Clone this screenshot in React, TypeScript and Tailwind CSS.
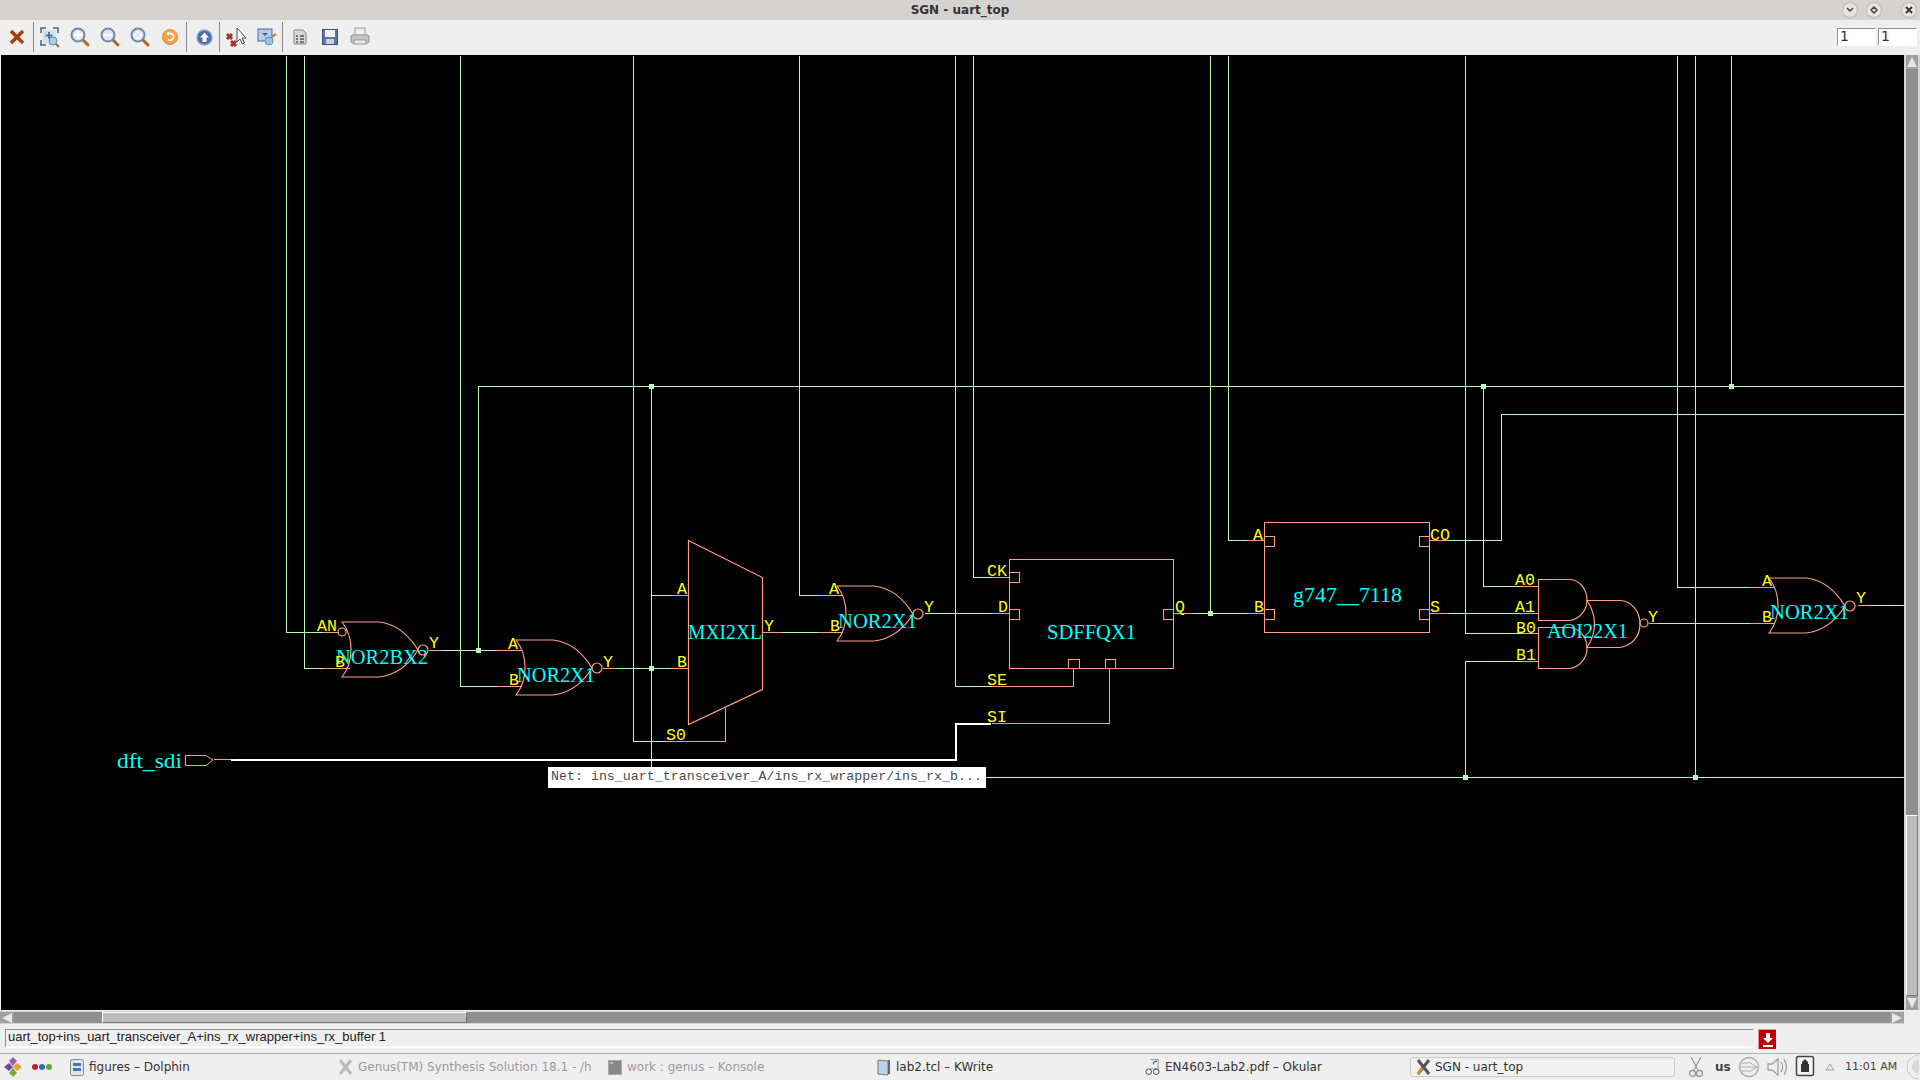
import React from 'react';

const GREEN = '#b9f7b4';
const ORANGE = '#ff9f80';
const SERIF = '"Liberation Serif", serif';
const MONO = '"Liberation Mono", monospace';

// [x1,y1,x2,y2,...] polylines
const greenWires: number[][] = [
  [286, 55, 286, 632, 322, 632],
  [304, 55, 304, 668, 322, 668],
  [460, 55, 460, 686, 496, 686],
  [441, 650, 496, 650],
  [478, 650, 478, 386, 1905, 386],
  [633, 55, 633, 741, 665, 741],
  [651, 386, 651, 777, 1905, 777],
  [651, 595, 670, 595],
  [615, 668, 670, 668],
  [781, 632, 817, 632],
  [799, 55, 799, 595, 817, 595],
  [925, 613, 991, 613],
  [973, 55, 973, 577, 991, 577],
  [955, 55, 955, 686, 991, 686],
  [1210, 55, 1210, 613],
  [1192, 613, 1246, 613],
  [1228, 55, 1228, 540, 1246, 540],
  [1447, 540, 1501, 540, 1501, 414, 1905, 414],
  [1447, 613, 1520, 613],
  [1465, 55, 1465, 633, 1520, 633],
  [1465, 777, 1465, 661, 1520, 661],
  [1483, 386, 1483, 586, 1520, 586],
  [1657, 623, 1749, 623],
  [1677, 55, 1677, 587, 1749, 587],
  [1695, 55, 1695, 777],
  [1731, 55, 1731, 386],
  [1867, 605, 1905, 605],
];

const orangeWires: number[][] = [
  [322, 632, 338, 632],
  [322, 668, 349, 668],
  [428, 650, 441, 650],
  [496, 650, 521, 650],
  [496, 686, 521, 686],
  [602, 668, 615, 668],
  [670, 595, 688, 595],
  [670, 668, 688, 668],
  [665, 741, 725, 741, 725, 707],
  [762, 632, 781, 632],
  [817, 595, 842, 595],
  [817, 632, 842, 632],
  [924, 613, 925, 613],
  [991, 577, 1009, 577],
  [991, 613, 1009, 613],
  [991, 686, 1073, 686, 1073, 668],
  [991, 723, 1109, 723, 1109, 668],
  [1173, 613, 1192, 613],
  [1246, 540, 1264, 540],
  [1246, 613, 1264, 613],
  [1429, 540, 1447, 540],
  [1429, 613, 1447, 613],
  [1520, 586, 1538, 586],
  [1520, 613, 1538, 613],
  [1520, 633, 1538, 633],
  [1520, 661, 1538, 661],
  [1648, 623, 1657, 623],
  [1749, 587, 1774, 587],
  [1749, 623, 1774, 623],
  [1857, 605, 1867, 605],
  [213, 759, 231, 759],
];

const nodes: [number, number][] = [
  [478, 650], [651, 386], [651, 668], [1210, 613], [1483, 386], [1731, 386], [1465, 777], [1695, 777],
];

const pins: [string, number, number][] = [
  ['AN', 317, 631], ['B', 335, 667], ['Y', 429, 648],
  ['A', 508, 649], ['B', 509, 685], ['Y', 603, 667],
  ['A', 677, 594], ['B', 677, 667], ['Y', 764, 631], ['S0', 666, 740],
  ['A', 829, 594], ['B', 830, 631], ['Y', 924, 612],
  ['CK', 987, 576], ['D', 998, 612], ['SE', 987, 685], ['SI', 987, 722], ['Q', 1175, 612],
  ['A', 1253, 540], ['B', 1254, 612], ['CO', 1430, 540], ['S', 1430, 612],
  ['A0', 1515, 585], ['A1', 1515, 612], ['B0', 1516, 633], ['B1', 1516, 660], ['Y', 1648, 622],
  ['A', 1762, 586], ['B', 1762, 622], ['Y', 1856, 603],
];

const labels: [string, number, number, number][] = [
  ['NOR2BX2', 336, 664, 92],
  ['NOR2X1', 517, 682, 78],
  ['MXI2XL', 688, 639, 74],
  ['NOR2X1', 838, 628, 79],
  ['SDFFQX1', 1047, 639, 89],
  ['g747__7118', 1293, 602, 109],
  ['AOI22X1', 1547, 638, 81],
  ['NOR2X1', 1770, 619, 79],
  ['dft_sdi', 117, 768, 65],
];

const Bubble = ({ x, y, r }: { x: number; y: number; r: number }) => (
  <circle cx={x} cy={y} r={r} fill="none" stroke={ORANGE} strokeWidth={1.2} shapeRendering="geometricPrecision" />
);

const NorGate = ({ x, y }: { x: number; y: number }) => (
  <g>
    <path
      fill="none"
      stroke={ORANGE}
      strokeWidth={1.2}
      shapeRendering="geometricPrecision"
      d={`M${x} ${y}H${x + 37}C${x + 55} ${y + 2} ${x + 68} ${y + 15} ${x + 76} ${y + 28}C${x + 68} ${y + 41} ${x + 55} ${y + 53} ${x + 37} ${y + 55}H${x}C${x + 12} ${y + 40} ${x + 12} ${y + 15} ${x} ${y}Z`}
    />
    <Bubble x={x + 81} y={y + 28} r={5} />
  </g>
);

const Port = ({ x, y, w = 10, h = 10 }: { x: number; y: number; w?: number; h?: number }) => (
  <rect x={x + 0.5} y={y + 0.5} width={w} height={h} fill="none" stroke={ORANGE} />
);

const Schematic = () => (
  <svg className="-ml-px block" width={1920} height={955} viewBox="0 55 1920 955" shapeRendering="crispEdges">
    {greenWires.map((w, i) => (
      <polyline key={i} points={w.map((v) => v + 0.5).join(' ')} fill="none" stroke={GREEN} strokeWidth={1} />
    ))}
    {orangeWires.map((w, i) => (
      <polyline key={i} points={w.map((v) => v + 0.5).join(' ')} fill="none" stroke={ORANGE} strokeWidth={1} />
    ))}
    <polyline points="231,759.5 955.5,759.5 955.5,723.5 991,723.5" fill="none" stroke="#fff" strokeWidth={2} />
    {nodes.map(([x, y], i) => (
      <rect key={i} x={x - 2} y={y - 2} width={5} height={5} fill={GREEN} />
    ))}

    <NorGate x={342} y={622} />
    <Bubble x={342} y={632} r={4} />
    <NorGate x={516} y={640} />
    <NorGate x={837} y={586} />
    <NorGate x={1769} y={578} />

    <polygon points="688.5,540.5 762.5,577.5 762.5,689.5 688.5,724.5" fill="none" stroke={ORANGE} shapeRendering="geometricPrecision" strokeWidth={1.2} />

    <rect x={1009.5} y={559.5} width={164} height={109} fill="none" stroke={ORANGE} />
    <Port x={1009} y={572} />
    <Port x={1009} y={609} />
    <Port x={1163} y={609} />
    <Port x={1068} y={659} w={11} h={9} />
    <Port x={1105} y={659} w={10} h={9} />

    <rect x={1264.5} y={522.5} width={165} height={110} fill="none" stroke={ORANGE} />
    <Port x={1264} y={536} />
    <Port x={1264} y={609} />
    <Port x={1419} y={536} />
    <Port x={1419} y={609} />

    <g fill="none" stroke={ORANGE} strokeWidth={1.2} shapeRendering="geometricPrecision">
      <path d="M1538.5 579.5H1570C1580 580 1587 590 1587 600C1587 610 1580 619 1570 620.5H1538.5Z" />
      <path d="M1538.5 627.5H1570C1580 628 1587 638 1587 648C1587 658 1580 667 1570 668.5H1538.5Z" />
      <path d="M1587 600.5H1620C1632 601 1640 612 1640 624C1640 636 1632 646 1620 647.5H1587C1597 633 1597 615 1587 600.5Z" />
      <circle cx={1644} cy={623} r={4} />
    </g>

    <path d="M185.5 755.5H206L213 760L206 765.5H185.5Z" fill="none" stroke={ORANGE} strokeWidth={1} shapeRendering="geometricPrecision" />

    {labels.map(([t, x, y, w]) => (
      <text key={`${t}${x}`} x={x} y={y} fill="#00ffff" fontFamily={SERIF} fontSize={21} textLength={w} lengthAdjust="spacingAndGlyphs">
        {t}
      </text>
    ))}
    {pins.map(([t, x, y]) => (
      <text key={`${t}${x}${y}`} x={x} y={y} fill="#ffff00" fontFamily={MONO} fontSize={16.6}>
        {t}
      </text>
    ))}
  </svg>
);

const ToolSep = () => <div className="h-[30px] w-px bg-[#8a8a8a]" />;

const Tool = ({ w = 30, children }: { w?: number; children: React.ReactNode }) => (
  <div className={`flex justify-center ${w === 31 ? 'w-[31px]' : 'w-[30px]'}`}>{children}</div>
);

const Mag = ({ children }: { children?: React.ReactNode }) => (
  <svg width={22} height={22} viewBox="0 0 22 22">
    <path d="M13 13l6 6" stroke="#b5651d" strokeWidth={3} strokeLinecap="round" />
    <circle cx={9} cy={9} r={6.5} fill="#dfe7f2" stroke="#6f88ad" strokeWidth={2} />
    {children}
  </svg>
);

const Toolbar = () => (
  <div className="flex h-[35px] items-center bg-[#efefef] pb-px">
    <div className="flex w-[33px] justify-center">
      <svg width={16} height={16} viewBox="0 0 16 16">
        <path d="M2 2l12 12M14 2L2 14" stroke="#a83c10" strokeWidth={3.5} />
      </svg>
    </div>
    <ToolSep />
    <div className="flex w-[152px] items-center pl-px">
      <Tool>
        <svg width={22} height={22} viewBox="0 0 22 22" fill="none">
          <path d="M2 7V2h5M14 2h5v5M2 14v5h5" stroke="#3f6a92" strokeWidth={1.5} />
          <rect x="4" y="4" width="13" height="13" fill="#d5e2ee" />
          <path d="M10 6v7M6.5 9.500h7" stroke="#4d7aa5" strokeWidth={2} />
          <circle cx="14" cy="15" r="4" fill="#a9cdea" stroke="#5f8fb8" />
          <path d="M17 18l3 3" stroke="#b5651d" strokeWidth={2} />
        </svg>
      </Tool>
      <Tool>
        <Mag>
          <path d="M9 5v8M5 9h8" stroke="#fff" strokeWidth={2.500} />
        </Mag>
      </Tool>
      <Tool>
        <Mag>
          <path d="M5 9h8" stroke="#fff" strokeWidth={2.500} />
        </Mag>
      </Tool>
      <Tool>
        <Mag>
          <path d="M9 4.500l2 2.500H7zM9 13.500l2-2.500H7zM4.500 9L7 7v4zM13.500 9L11 7v4z" fill="#fff" />
        </Mag>
      </Tool>
      <Tool>
        <svg width={18} height={18} viewBox="0 0 18 18" fill="none">
          <circle cx="9" cy="9" r="7.500" fill="#f2a44c" stroke="#e58a2c" />
          <path d="M6 5.500h4.500a3.500 3.500 0 1 1-3.500 6" stroke="#fff" strokeWidth={1.5} />
          <path d="M8 3.500L5.500 5.500 8 7.500z" fill="#fff" />
        </svg>
      </Tool>
    </div>
    <ToolSep />
    <div className="flex w-[32px] justify-center pl-[3px]">
      <svg width={17} height={17} viewBox="0 0 17 17">
        <circle cx="8.500" cy="8.500" r="7.500" fill="#4a6fa8" stroke="#8ea5c9" strokeWidth={1.500} />
        <path d="M8.500 3.500L13 8.500H10.500V13H6.500V8.500H4z" fill="#fff" />
      </svg>
    </div>
    <ToolSep />
    <div className="flex w-[62px] items-center">
      <Tool w={31}>
        <svg width={22} height={22} viewBox="0 0 22 22">
          <path d="M2 8l5 5M7 8l-5 5M6 15l5 5M11 15l-5 5" stroke="#a83232" strokeWidth={3} />
          <path d="M12 2v14l3-3 2.500 5 2-1-2.500-5h4z" fill="#fff" stroke="#444" />
        </svg>
      </Tool>
      <Tool w={31}>
        <svg width={20} height={20} viewBox="0 0 20 20">
          <rect x="1" y="2" width="14" height="12" fill="#b8cbe6" stroke="#4a6aa0" />
          <path d="M5 6h6l-3 3z" fill="#3f6296" />
          <circle cx="12" cy="14" r="4" fill="#9cc2e0" stroke="#5f8fb8" />
          <path d="M15 10l4-3" stroke="#c87820" strokeWidth={2} />
        </svg>
      </Tool>
    </div>
    <ToolSep />
    <div className="flex items-center pl-[2px]">
      <Tool>
        <svg width={14} height={16} viewBox="0 0 14 16">
          <path d="M1 1h9l3 3v11H1z" fill="#d8d8d8" stroke="#8a8a8a" />
          <path d="M3 7h2M7 7h4M3 10h2M7 10h4M3 13h2M7 13h4" stroke="#555" strokeWidth={1.500} />
        </svg>
      </Tool>
      <Tool>
        <svg width={16} height={16} viewBox="0 0 16 16">
          <rect x="0.500" y="0.500" width="15" height="15" fill="#5c74a8" stroke="#3c5280" />
          <rect x="3" y="1" width="10" height="7" fill="#f2f2f2" />
          <rect x="4" y="10" width="8" height="5" fill="#c8d0de" />
        </svg>
      </Tool>
      <Tool>
        <svg width={20} height={20} viewBox="0 0 20 20">
          <rect x="5" y="1" width="10" height="8" fill="#eee" stroke="#999" />
          <rect x="1" y="8" width="18" height="8" rx="2" fill="#c4c4c4" stroke="#8a8a8a" />
          <rect x="4" y="13" width="12" height="4" fill="#e8e8e8" stroke="#999" />
        </svg>
      </Tool>
    </div>
    <div className="ml-auto flex gap-[2px] pr-[3px]">
      {[0, 1].map((i) => (
        <div
          key={i}
          className="h-[18px] w-[39px] border border-t-[#909090] border-l-[#909090] border-r-white border-b-white bg-white pl-[2px] text-[14px] leading-[15px] text-[#333] [font-family:'DejaVu_Sans',sans-serif]"
        >
          1
        </div>
      ))}
    </div>
  </div>
);

const WinBtn = ({ children }: { children: React.ReactNode }) => (
  <div className="flex h-[14px] w-[14px] items-center justify-center rounded-full bg-[#e6e3e1] shadow-[0_0_2px_#8f8c8a]">{children}</div>
);

const TaskItem = ({ icon, label, dim }: { icon: React.ReactNode; label: string; dim?: boolean }) => (
  <div className={`flex h-[20px] w-[269px] items-center gap-[5px] overflow-hidden pl-[4px] whitespace-nowrap ${dim ? 'text-[#9b9b9b]' : 'text-[#333]'}`}>
    <span className="flex w-[15px] shrink-0 justify-center">{icon}</span>
    <span>{label}</span>
  </div>
);

const XIcon = ({ dim }: { dim?: boolean }) => (
  <svg width={15} height={16} viewBox="0 0 15 16">
    <path d="M2 1l11 14M13 1L2 15" stroke={dim ? '#bbb' : '#555'} strokeWidth={3} />
    {!dim && <path d="M2 15l4-6" stroke="#d88a2a" strokeWidth={3} />}
  </svg>
);

export default function App() {
  return (
    <div className="flex h-[1080px] w-[1920px] flex-col overflow-hidden bg-[#efefef] [font-family:'DejaVu_Sans',sans-serif]">
      {/* title bar */}
      <div className="relative flex h-[20px] items-center justify-center bg-[#d6d2d0] text-[12px] font-bold text-[#333]">
        SGN - uart_top
        <div className="absolute right-[4px] top-[3px] flex">
          <WinBtn>
            <svg width={8} height={6} viewBox="0 0 8 6">
              <path d="M1 1l3 3 3-3" fill="none" stroke="#444" strokeWidth={1.500} />
            </svg>
          </WinBtn>
          <div className="w-[10px]" />
          <WinBtn>
            <svg width={8} height={8} viewBox="0 0 8 8">
              <path d="M4 1l3 3-3 3-3-3z" fill="none" stroke="#444" strokeWidth={1.500} />
            </svg>
          </WinBtn>
          <div className="w-[21px]" />
          <WinBtn>
            <svg width={8} height={8} viewBox="0 0 8 8">
              <path d="M1 1l6 6M7 1L1 7" stroke="#333" strokeWidth={1.800} />
            </svg>
          </WinBtn>
        </div>
      </div>

      <Toolbar />

      {/* schematic + vertical scroll */}
      <div className="flex h-[955px]">
        <div className="relative flex-1 overflow-hidden border-l border-[#efefef] bg-black">
          <Schematic />
          <div className="absolute left-[547px] top-[712px] flex h-[21px] w-[438px] items-center bg-white pb-[2px] pl-[3px] text-[13.3px] whitespace-nowrap text-[#4d4d4d] [font-family:'Liberation_Mono',monospace]">
            Net: ins_uart_transceiver_A/ins_rx_wrapper/ins_rx_b...
          </div>
        </div>
        <div className="flex w-[16px] flex-col border-x-[2px] border-[#d4d4d4] bg-[#8f8f8f]">
          <div className="flex h-[14px] items-center justify-center bg-[#a0a0a0]">
            <div className="h-0 w-0 border-x-[5px] border-b-[10px] border-x-transparent border-b-[#e8e8e8]" />
          </div>
          <div className="h-[746px]" />
          <div className="flex-1 border border-t-white border-l-white border-r-[#777] border-b-[#777] bg-[#bcbcbc]" />
          <div className="flex h-[14px] items-center justify-center bg-[#a0a0a0]">
            <div className="h-0 w-0 border-x-[5px] border-t-[10px] border-x-transparent border-t-[#e8e8e8]" />
          </div>
        </div>
      </div>

      {/* horizontal scroll */}
      <div className="mt-px flex h-[13px] w-[1904px] border-y border-[#d4d4d4] bg-[#8f8f8f]">
        <div className="flex w-[14px] items-center justify-center bg-[#a0a0a0]">
          <div className="h-0 w-0 border-y-[5px] border-r-[10px] border-y-transparent border-r-[#e8e8e8]" />
        </div>
        <div className="ml-[88px] w-[365px] border border-t-white border-l-white border-r-[#777] border-b-[#777] bg-[#bcbcbc]" />
        <div className="flex-1" />
        <div className="flex w-[14px] items-center justify-center bg-[#a0a0a0]">
          <div className="h-0 w-0 border-y-[5px] border-l-[10px] border-y-transparent border-l-[#e8e8e8]" />
        </div>
      </div>

      {/* status line */}
      <div className="mt-[5px] flex h-[21px] items-start pl-[5px]">
        <div className="h-[19px] w-[1748px] border-t border-l border-t-[#909090] border-l-[#909090] border-b-2 border-b-white bg-[#efefef] pl-[2px] text-[13px] leading-[14px] whitespace-nowrap text-[#222] [font-family:'Liberation_Sans',sans-serif]">
          uart_top+ins_uart_transceiver_A+ins_rx_wrapper+ins_rx_buffer 1
        </div>
        <div className="ml-[5px] flex h-[20px] w-[18px] items-center justify-center border-t border-l border-[#e88] bg-[#c00000]">
          <svg width={10} height={14} viewBox="0 0 10 14">
            <path d="M3 0h4v5h3L5 10 0 5h3zM0 12h10v2H0z" fill="#fff" />
          </svg>
        </div>
      </div>

      {/* taskbar */}
      <div className="mt-[3px] flex h-[27px] items-center border-t border-[#b0b0b0] bg-[#efefef] text-[12px]">
        <div className="flex w-[65px] items-center pl-[3px]">
          <svg width={20} height={22} viewBox="0 0 20 22">
            <path d="M10 1l4 4-4 5-4-5z" fill="#9a5fa8" />
            <path d="M1 11l5-4 4 4-4 4z" fill="#6a4a9a" />
            <path d="M19 11l-5-4-4 4 4 4z" fill="#e8a030" />
            <path d="M10 21l4-4-4-5-4 5z" fill="#7fa838" />
          </svg>
          <div className="ml-[9px] flex gap-px">
            <span className="h-[6px] w-[6px] rounded-full bg-[#c8202a]" />
            <span className="h-[6px] w-[6px] rounded-full bg-[#3a6ab0]" />
            <span className="h-[6px] w-[6px] rounded-full bg-[#5aa83a]" />
          </div>
        </div>
        <TaskItem
          label="figures – Dolphin"
          icon={
            <svg width={14} height={17} viewBox="0 0 14 17">
              <rect x="0.500" y="0.500" width="13" height="16" rx="2" fill="#e4e4e4" stroke="#888" />
              <rect x="3" y="4" width="8" height="3" fill="#3b78c4" />
              <rect x="3" y="9" width="8" height="3" fill="#3b78c4" />
            </svg>
          }
        />
        <TaskItem dim label="Genus(TM) Synthesis Solution 18.1 - /h" icon={<XIcon dim />} />
        <TaskItem
          dim
          label="work : genus – Konsole"
          icon={
            <svg width={14} height={15} viewBox="0 0 14 15">
              <rect x="0.500" y="0.500" width="13" height="14" fill="#888" stroke="#aaa" />
              <path d="M2 3h3" stroke="#eee" />
            </svg>
          }
        />
        <TaskItem
          label="lab2.tcl – KWrite"
          icon={
            <svg width={14} height={18} viewBox="0 0 14 18">
              <path d="M1 2l10 1v14l-10-1z" fill="#b9d3ea" stroke="#777" />
              <path d="M11 2h2v14h-2z" fill="#666" />
            </svg>
          }
        />
        <TaskItem
          label="EN4603-Lab2.pdf – Okular"
          icon={
            <svg width={16} height={18} viewBox="0 0 16 18" fill="none">
              <path d="M6 1h8v10H6" stroke="#999" />
              <path d="M13 3a3 3 0 0 0-4 3" stroke="#2a7fd0" strokeWidth={1.500} />
              <circle cx="4" cy="14" r="3" stroke="#444" />
              <circle cx="12" cy="14" r="3" stroke="#444" />
            </svg>
          }
        />
        <div className="flex h-[20px] w-[265px] items-center gap-[4px] rounded-[3px] border border-[#c9c9c9] bg-[#f1f1f1] pl-[5px] text-[#333]">
          <XIcon />
          SGN - uart_top
        </div>
        <div className="ml-[13px] flex items-center">
          <svg width={16} height={22} viewBox="0 0 16 22" fill="none" stroke="#9a9a9a" strokeWidth={1.300}>
            <path d="M3 1l7 13M13 1L6 14" />
            <circle cx="4.500" cy="17.500" r="3" />
            <circle cx="11.500" cy="17.500" r="3" />
          </svg>
          <span className="ml-[11px] w-[18px] font-bold text-[#444]">us</span>
          <svg className="ml-[5px]" width={22} height={22} viewBox="0 0 22 22" fill="none" stroke="#b0b0b0">
            <circle cx="11" cy="11" r="9.500" strokeWidth={1.500} />
            <path d="M1 11h20M11 6l8 5-8 5M3 7h8M3 15h8" />
          </svg>
          <svg className="ml-[6px]" width={22} height={24} viewBox="0 0 22 24" fill="none" stroke="#a0a0a0" strokeWidth={1.300}>
            <path d="M2 9h4l6-5v16l-6-5H2z" fill="#eee" />
            <path d="M15 7c2 3 2 7 0 10M18 4c3 5 3 11 0 16" />
          </svg>
          <svg className="ml-[7px]" width={20} height={24} viewBox="0 0 20 24">
            <rect x="1.500" y="1.500" width="17" height="19" rx="2" fill="#f4f4f4" stroke="#444" strokeWidth={1.500} />
            <path d="M10 4l3 3v2h1v8H6V9h1V7z" fill="#333" />
          </svg>
          <svg className="ml-[10px]" width={10} height={8} viewBox="0 0 10 8">
            <path d="M5 1l4 6H1z" fill="none" stroke="#9a9a9a" />
          </svg>
          <span className="ml-[10px] text-[11px] whitespace-nowrap text-[#444]">11:01 AM</span>
          <svg className="ml-[4px]" width={18} height={26} viewBox="0 0 18 26" fill="none">
            <circle cx="18" cy="13" r="12" stroke="#c8c8c8" />
            <circle cx="18" cy="13" r="7" fill="#d8d8d8" />
          </svg>
        </div>
      </div>
    </div>
  );
}
